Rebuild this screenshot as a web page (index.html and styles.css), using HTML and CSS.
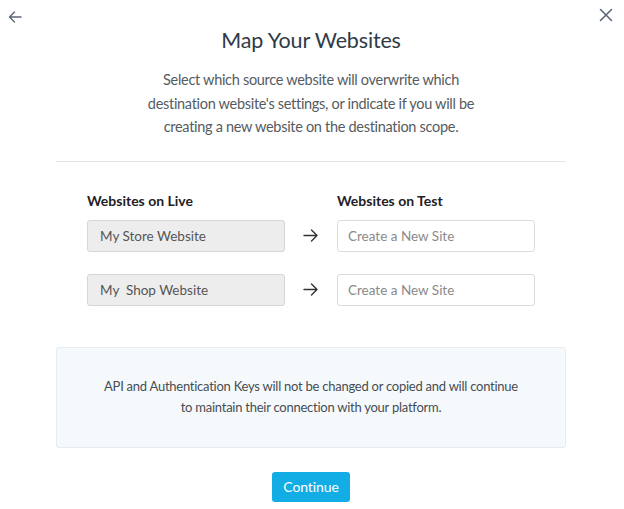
FILE: index.html
```html
<!DOCTYPE html>
<html lang="en">
<head>
<meta charset="utf-8">
<title>Map Your Websites</title>
<link rel="stylesheet" href="styles.css">
</head>
<body>
<div class="modal">
  <div class="topbar">
    <button class="icon-btn back" aria-label="Back">
      <svg width="14" height="14" viewBox="0 0 14 14" fill="none" stroke="#5b6775" stroke-width="1.4" stroke-linecap="round" stroke-linejoin="round"><path d="M13 7H1.5M6.5 2L1.5 7l5 5"/></svg>
    </button>
    <button class="icon-btn close" aria-label="Close">
      <svg width="14" height="14" viewBox="0 0 14 14" fill="none" stroke="#5b6775" stroke-width="1.6" stroke-linecap="round"><path d="M1.5 1.5l11 11M12.5 1.5l-11 11"/></svg>
    </button>
  </div>
  <div class="content">
    <h1 class="title">Map Your Websites</h1>
    <p class="desc">Select which source website will overwrite which<br>destination website's settings, or indicate if you will be<br>creating a new website on the destination scope.</p>
    <hr class="divider">
    <div class="mapping">
      <div class="col-head">Websites on Live</div>
      <div></div>
      <div class="col-head">Websites on Test</div>

      <div class="field source">My Store Website</div>
      <div class="arrow"><svg width="15" height="13" viewBox="0 0 15 13" fill="none" stroke="#333" stroke-width="1.4" stroke-linecap="round" stroke-linejoin="round"><path d="M1 6.5h13M8.5 1l5.5 5.5L8.5 12"/></svg></div>
      <div class="field dest">Create a New Site</div>

      <div class="field source">My&nbsp; Shop Website</div>
      <div class="arrow"><svg width="15" height="13" viewBox="0 0 15 13" fill="none" stroke="#333" stroke-width="1.4" stroke-linecap="round" stroke-linejoin="round"><path d="M1 6.5h13M8.5 1l5.5 5.5L8.5 12"/></svg></div>
      <div class="field dest">Create a New Site</div>
    </div>
    <div class="info">
      <p>API and Authentication Keys will not be changed or copied and will continue<br>to maintain their connection with your platform.</p>
    </div>
    <div class="actions">
      <button class="primary">Continue</button>
    </div>
  </div>
</div>
</body>
</html>
```
FILE: styles.css
```css
* { box-sizing: border-box; }
html, body { margin: 0; padding: 0; background: #ffffff; }
body { font-family: Lato, "Open Sans", Arial, sans-serif; color: #333; }

.modal { width: 624px; height: 509px; background: #fff; padding-right: 2px; }

.topbar {
  height: 24px;
  display: flex;
  justify-content: space-between;
  align-items: flex-start;
  padding: 0 9px 0 8px;
}
.icon-btn {
  border: 0; background: none; padding: 0; margin: 0;
  width: 14px; height: 14px; display: flex; cursor: pointer;
}
.icon-btn.back { margin-top: 10px; }
.icon-btn.close { margin-top: 8px; }

.content {
  width: 510px;
  margin: 0 auto;
  display: flex;
  flex-direction: column;
  align-items: center;
}

.title {
  margin: 2px 0 0;
  font-size: 21.5px;
  letter-spacing: -0.15px;
  line-height: 28px;
  font-weight: 400;
  color: #2f3b47;
}
.desc {
  margin: 14px 0 0;
  font-size: 14.5px;
  letter-spacing: -0.3px;
  line-height: 23.5px;
  text-align: center;
  color: #555b61;
}
.divider {
  width: 100%;
  margin: 22px 0 0;
  border: 0;
  border-top: 1px solid #e4e4e4;
  height: 0;
}

.mapping {
  margin-top: 29px;
  display: grid;
  grid-template-columns: 198px 52px 198px;
  row-gap: 22px;
}
.col-head {
  font-size: 14px;
  line-height: 20px;
  font-weight: 700;
  color: #1f2124;
  margin-bottom: -13px;
}
.field {
  height: 32px;
  border-radius: 3px;
  padding: 0 12px;
  display: flex;
  align-items: center;
  font-size: 13.5px;
}
.field.source {
  background: #ededed;
  border: 1px solid #d6d6d6;
  color: #555;
}
.field.dest {
  background: #fff;
  border: 1px solid #dcdcdc;
  color: #8a8a8a;
  padding-left: 10px;
}
.arrow {
  display: flex;
  align-items: center;
  padding-left: 18px;
}

.info {
  margin-top: 41px;
  width: 100%;
  height: 101px;
  background: #f5f9fc;
  border: 1px solid #e6ecf0;
  border-radius: 3px;
  display: flex;
  align-items: center;
  justify-content: center;
}
.info p {
  margin: 0;
  font-size: 13px;
  letter-spacing: -0.25px;
  line-height: 21px;
  text-align: center;
  color: #474d52;
}

.actions { margin-top: 24px; display: flex; justify-content: center; }
.primary {
  height: 30px;
  width: 78px;
  border: 0;
  border-radius: 3px;
  background: #13ade6;
  color: #fff;
  font-family: inherit;
  font-size: 14px;
  letter-spacing: -0.1px;
  padding: 0;
  cursor: pointer;
}
```
